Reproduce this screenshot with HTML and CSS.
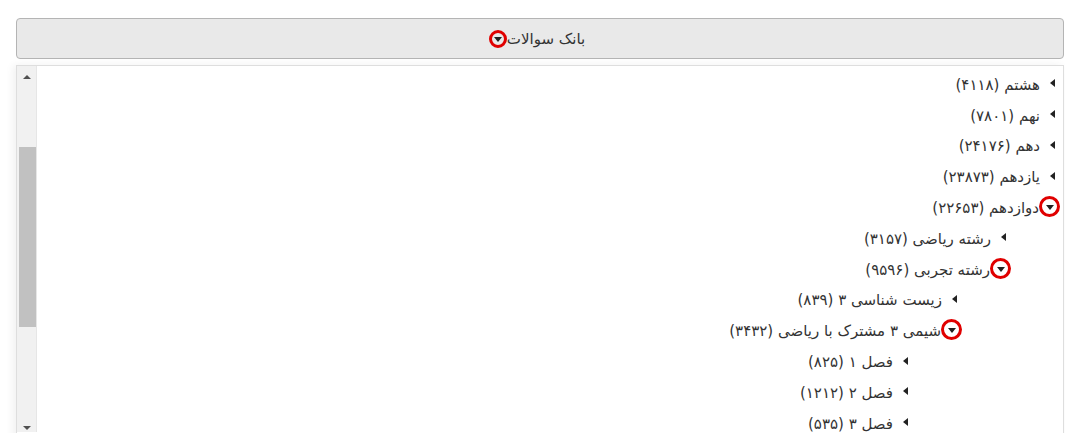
FILE: index.html
```html
<!DOCTYPE html>
<html lang="fa">
<head>
<meta charset="utf-8">
<title>بانک سوالات</title>
<link rel="stylesheet" href="styles.css">
</head>
<body>
<div class="page">
  <div class="bank-header">
    <span class="title">بانک سوالات</span><span class="toggle small"><span class="tri"></span></span>
  </div>
  <div class="panel">
    <div class="tree-wrap">
      <ul class="tree">
        <li><div class="row"><span class="caret"></span><span class="label">هشتم (۴۱۱۸)</span></div></li>
        <li><div class="row"><span class="caret"></span><span class="label">نهم (۷۸۰۱)</span></div></li>
        <li><div class="row"><span class="caret"></span><span class="label">دهم (۲۴۱۷۶)</span></div></li>
        <li><div class="row"><span class="caret"></span><span class="label">یازدهم (۲۳۸۷۳)</span></div></li>
        <li><div class="row"><span class="toggle"><span class="tri"></span></span><span class="label">دوازدهم (۲۲۶۵۳)</span></div>
          <ul class="tree sub">
            <li><div class="row"><span class="caret"></span><span class="label">رشته ریاضی (۳۱۵۷)</span></div></li>
            <li><div class="row"><span class="toggle"><span class="tri"></span></span><span class="label">رشته تجربی (۹۵۹۶)</span></div>
              <ul class="tree sub">
                <li><div class="row"><span class="caret"></span><span class="label">زیست شناسی ۳ (۸۳۹)</span></div></li>
                <li><div class="row"><span class="toggle"><span class="tri"></span></span><span class="label">شیمی ۳ مشترک با ریاضی (۳۴۳۲)</span></div>
                  <ul class="tree sub">
                    <li><div class="row"><span class="caret"></span><span class="label">فصل ۱ (۸۲۵)</span></div></li>
                    <li><div class="row"><span class="caret"></span><span class="label">فصل ۲ (۱۲۱۲)</span></div></li>
                    <li><div class="row"><span class="caret"></span><span class="label">فصل ۳ (۵۳۵)</span></div></li>
                  </ul>
                </li>
              </ul>
            </li>
          </ul>
        </li>
      </ul>
    </div>
    <div class="scrollbar">
      <span class="arrow up"></span>
      <div class="track"><div class="thumb"></div></div>
      <span class="arrow down"></span>
    </div>
  </div>
</div>
</body>
</html>
```
FILE: styles.css
```css
html, body {
  margin: 0;
  padding: 0;
  background: #ffffff;
  overflow: hidden;
  height: 433px;
}
body {
  font-family: "DejaVu Sans", "Noto Sans", sans-serif;
  color: #333333;
  font-size: 15px;
}
.page {
  padding: 18px 1px 0 16px;
  display: flex;
  flex-direction: column;
  gap: 6px;
}
.bank-header {
  height: 39px;
  border: 1px solid #b4b4b4;
  border-radius: 4px;
  background: #e9e9e9;
  display: flex;
  align-items: center;
  justify-content: center;
  direction: rtl;
}
.bank-header .title {
  font-size: 15px;
  color: #333;
  margin-top: 1px;
  margin-right: 6px;
}
.panel {
  height: 400px;
  border: 1px solid #dedede;
  display: flex;
  flex-direction: row;
  box-shadow: -3px 0 8px rgba(0,0,0,0.06);
}
.scrollbar {
  order: -1;
  width: 19px;
  background: #f1f1f1;
  border-right: 1px solid #e6e6e6;
  display: flex;
  flex-direction: column;
  align-items: center;
  height: 366px;
}
.scrollbar .track {
  flex: 1;
  width: 100%;
  display: flex;
  flex-direction: column;
  align-items: flex-end;
  padding-top: 63px;
}
.scrollbar .thumb {
  width: 17px;
  height: 180px;
  background: #c1c1c1;
}
.arrow {
  width: 0;
  height: 0;
  border-left: 4px solid transparent;
  border-right: 4px solid transparent;
  flex: none;
}
.arrow.up {
  border-bottom: 4px solid #505050;
  margin: 9px 0 5px;
}
.arrow.down {
  border-top: 4px solid #505050;
  margin: 4px 0 2px;
}
.tree-wrap {
  flex: 1;
  direction: rtl;
  padding-top: 2px;
}
.tree {
  list-style: none;
  margin: 0;
  padding: 0;
}
.tree.sub {
  padding-right: 49px;
}
.row {
  height: 30.8px;
  display: flex;
  align-items: center;
}
.caret {
  width: 0;
  height: 0;
  border-top: 4px solid transparent;
  border-bottom: 4px solid transparent;
  border-right: 5px solid #222;
  margin-right: 8px;
  margin-left: 10px;
  flex: none;
}
.toggle {
  width: 15px;
  height: 15px;
  border: 3px solid #e00000;
  border-radius: 50%;
  display: flex;
  align-items: center;
  justify-content: center;
  margin-right: 3px;
  flex: none;
  background: #fff;
}
.toggle.small {
  width: 12px;
  height: 12px;
  margin: 0;
  background: transparent;
}
.tri {
  width: 0;
  height: 0;
  border-left: 4px solid transparent;
  border-right: 4px solid transparent;
  border-top: 5px solid #222;
  margin-top: 2px;
}
.label {
  white-space: nowrap;
  font-size: 15px;
  color: #333;
  margin-top: 3px;
}
```
